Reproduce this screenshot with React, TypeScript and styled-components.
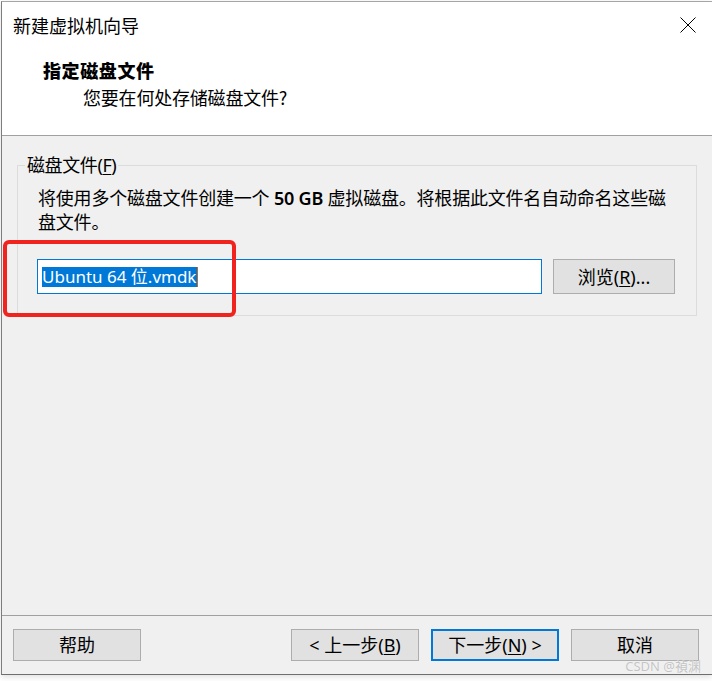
import React from "react";
import styled, { createGlobalStyle } from "styled-components";

const UI = `"Noto Sans", "Noto Sans CJK SC", sans-serif`;
const CJK = `"Noto Sans CJK SC", "Noto Sans", sans-serif`;

const GlobalStyle = createGlobalStyle`
  html, body { margin: 0; padding: 0; background: #ffffff; }
  body {
    width: 712px;
    height: 681px;
    overflow: hidden;
    font-family: ${UI};
    color: #000;
  }
  * { box-sizing: border-box; }
`;

const Window = styled.div`
  position: relative;
  margin: 1px 0 0 1px;
  width: 711px;
  height: 674px;
  display: flex;
  flex-direction: column;
  background: #f0f0f0;
  border-top: 1px solid #a6a6a6;
  border-left: 1px solid #7d7d7d;
  border-bottom: 1px solid #6e6e6e;
  box-shadow: 0 2px 6px rgba(0, 0, 0, 0.13);
`;

const TitleBar = styled.div`
  height: 44px;
  flex: none;
  display: flex;
  align-items: center;
  justify-content: space-between;
  padding: 0 16px 0 11px;
  background: #ffffff;
`;

const TitleText = styled.div`
  font-family: ${CJK};
  font-size: 18px;
  line-height: 24px;
  margin-top: 1px;
`;

const CloseIcon = styled.svg`
  width: 16px;
  height: 16px;
  display: block;
  margin-top: 1px;
`;

const Header = styled.div`
  height: 90px;
  flex: none;
  background: #ffffff;
  border-bottom: 1px solid #a0a0a0;
  padding: 12px 0 0 41px;
`;

const HeaderTitle = styled.div`
  font-family: ${CJK};
  font-size: 18px;
  font-weight: 900;
  line-height: 24px;
  letter-spacing: 0.6px;
`;

const HeaderSubtitle = styled.div`
  font-family: ${CJK};
  font-size: 18px;
  line-height: 24px;
  margin-top: 3px;
  padding-left: 40px;
  letter-spacing: -0.2px;
`;

const Body = styled.div`
  flex: 1;
  padding: 17px 15px 0 15px;
`;

const GroupBox = styled.fieldset`
  margin: 0;
  padding: 0;
  width: 680px;
  border: 1px solid #dcdcdc;
  min-width: 0;
`;

const GroupLegend = styled.legend`
  margin-left: 7px;
  padding: 0 2px;
  font-family: ${UI};
  font-size: 18px;
  line-height: 24px;
  letter-spacing: -0.4px;
`;

const GroupContent = styled.div`
  padding: 9px 20px 21px 19px;
`;

const Description = styled.div`
  font-family: ${UI};
  font-size: 18px;
  line-height: 24px;
  padding-left: 1px;
  letter-spacing: -0.2px;
`;

const Strong = styled.span`
  font-weight: 600;
`;

const FieldRow = styled.div`
  display: flex;
  gap: 11px;
  margin-top: 25px;
`;

const TextField = styled.div`
  width: 505px;
  height: 35px;
  background: #ffffff;
  border: 1px solid #0078d7;
  display: flex;
  align-items: center;
  padding-left: 4px;
`;

const Selection = styled.span`
  background: #0078d7;
  color: #ffffff;
  font-family: ${UI};
  font-size: 17px;
  line-height: 20px;
  height: 20px;
  padding-right: 1px;
  white-space: pre;
`;

const Caret = styled.span`
  display: inline-block;
  width: 1px;
  height: 20px;
  background: #c46a1a;
`;

const Button = styled.button<{ $w: number; $h: number; $default?: boolean }>`
  width: ${(p) => p.$w}px;
  height: ${(p) => p.$h}px;
  flex: none;
  margin: 0;
  padding: 0;
  background: #e1e1e1;
  border: ${(p) => (p.$default ? "2px solid #0078d7" : "1px solid #adadad")};
  font-family: ${UI};
  font-size: 18px;
  line-height: 24px;
  color: #000;
  display: flex;
  align-items: center;
  justify-content: center;
  white-space: pre;
`;

const Mnemonic = styled.span`
  text-decoration: underline;
  text-underline-offset: 2px;
  text-decoration-thickness: 1px;
`;

const Footer = styled.div`
  height: 59px;
  flex: none;
  border-top: 1px solid #a0a0a0;
  padding: 13px 13px 0 11px;
  display: flex;
  align-items: flex-start;
  gap: 12px;
`;

const Spacer = styled.div`
  flex: 1;
`;

const Annotation = styled.div`
  position: absolute;
  left: 1px;
  top: 238px;
  width: 233px;
  height: 77px;
  border: 4px solid #f0231f;
  border-radius: 6px;
  pointer-events: none;
`;

const Watermark = styled.div`
  position: absolute;
  right: 11px;
  bottom: 0px;
  font-family: ${UI};
  font-size: 13px;
  line-height: 15px;
  color: #c4c4c4;
  text-shadow: 0 0 1px #ffffff;
`;

export default function App() {
  return (
    <>
      <GlobalStyle />
      <Window>
        <TitleBar>
          <TitleText>新建虚拟机向导</TitleText>
          <CloseIcon viewBox="0 0 16 16">
            <path d="M0.5 0.5 L15.5 15.5 M15.5 0.5 L0.5 15.5" stroke="#000" strokeWidth="1" fill="none" />
          </CloseIcon>
        </TitleBar>
        <Header>
          <HeaderTitle>指定磁盘文件</HeaderTitle>
          <HeaderSubtitle>您要在何处存储磁盘文件?</HeaderSubtitle>
        </Header>
        <Body>
          <GroupBox>
            <GroupLegend>
              磁盘文件(<Mnemonic>F</Mnemonic>)
            </GroupLegend>
            <GroupContent>
              <Description>
                将使用多个磁盘文件创建一个 <Strong>50 GB</Strong> 虚拟磁盘。将根据此文件名自动命名这些磁盘文件。
              </Description>
              <FieldRow>
                <TextField>
                  <Selection>Ubuntu 64 位.vmdk</Selection>
                  <Caret />
                </TextField>
                <Button $w={122} $h={35}>
                  浏览(<Mnemonic>R</Mnemonic>)...
                </Button>
              </FieldRow>
            </GroupContent>
          </GroupBox>
        </Body>
        <Footer>
          <Button $w={128} $h={32}>帮助</Button>
          <Spacer />
          <Button $w={128} $h={32}>
            {"< 上一步("}<Mnemonic>B</Mnemonic>)
          </Button>
          <Button $w={128} $h={32} $default>
            下一步(<Mnemonic>N</Mnemonic>{") >"}
          </Button>
          <Button $w={128} $h={32}>取消</Button>
        </Footer>
        <Annotation />
        <Watermark>CSDN @禎渊</Watermark>
      </Window>
    </>
  );
}
